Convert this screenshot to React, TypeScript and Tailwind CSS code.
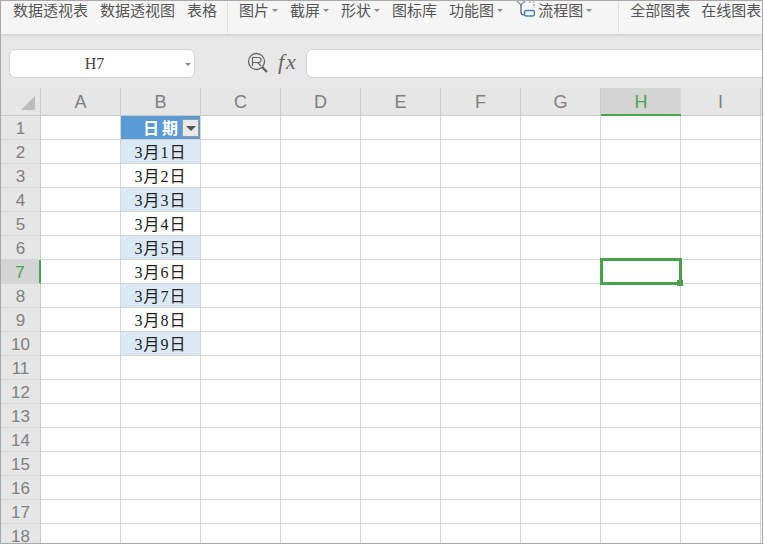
import { Fragment } from 'react'

const COLS = ['A', 'B', 'C', 'D', 'E', 'F', 'G', 'H', 'I', '']
const ROWS = Array.from({ length: 18 }, (_, i) => i + 1)
const DATES = ['3月1日', '3月2日', '3月3日', '3月4日', '3月5日', '3月6日', '3月7日', '3月8日', '3月9日']

function Caret({ className = '' }: { className?: string }) {
  return <span className={`w-0 h-0 border-x-[3px] border-x-transparent border-t-[3px] border-t-[#8a8a8a] ${className}`} />
}

function ToolItem({ label, caret, className = '' }: { label: string; caret?: boolean; className?: string }) {
  return (
    <div className={`flex items-center shrink-0 ${className}`}>
      <span>{label}</span>
      {caret && <Caret className="ml-[3px]" />}
    </div>
  )
}

function FlowIcon() {
  return (
    <svg width="20" height="20" viewBox="0 0 20 20" fill="none" className="shrink-0 -mt-[4px]">
      <path d="M1 2 L6 7 L11 2" stroke="#6d8fb5" strokeWidth="1.2" />
      <path d="M6 7 V14 Q6 17 9 17" stroke="#555" strokeWidth="1.2" />
      <path d="M14 4 H19 V10" stroke="#9a9a9a" strokeWidth="1.2" strokeDasharray="2 1.5" />
      <rect x="9.5" y="12.5" width="10" height="5.5" rx="2" stroke="#3f7fc4" strokeWidth="1.4" />
    </svg>
  )
}

function Toolbar() {
  return (
    <div className="h-[33px] shrink-0 bg-[#f5f5f5] flex items-start text-[15px] leading-[17px] text-[#555] shadow-[0_1px_3px_rgba(0,0,0,0.15)] relative pl-3 pt-[1px]">
      <ToolItem label="数据透视表" />
      <ToolItem label="数据透视图" className="ml-3" />
      <ToolItem label="表格" className="ml-3" />
      <div className="w-px h-[31px] bg-[#e0e0e0] ml-[10px] shrink-0" />
      <ToolItem label="图片" caret className="ml-[11px]" />
      <ToolItem label="截屏" caret className="ml-3" />
      <ToolItem label="形状" caret className="ml-3" />
      <ToolItem label="图标库" className="ml-3" />
      <ToolItem label="功能图" caret className="ml-3" />
      <div className="ml-3 mr-[3px] shrink-0 flex items-start"><FlowIcon /></div>
      <ToolItem label="流程图" caret />
      <div className="w-px h-[31px] bg-[#e0e0e0] ml-[26px] shrink-0" />
      <ToolItem label="全部图表" className="ml-[11px]" />
      <ToolItem label="在线图表" className="ml-[11px]" />
    </div>
  )
}

function FormulaBar() {
  return (
    <div className="h-[54px] shrink-0 bg-[#e8e8e8] flex items-center pl-2 pt-[4px]">
      <div className="w-[186px] h-[29px] shrink-0 bg-white border border-[#d2d2d2] rounded-[6px] flex items-center relative">
        <span className="w-full text-center text-[16px] text-[#444] pr-[15px] pt-[2px] font-['Liberation_Serif',serif]">H7</span>
        <Caret className="absolute right-[3px] top-[13px]" />
      </div>
      <svg width="22" height="22" viewBox="0 0 22 22" fill="none" className="ml-[52px] shrink-0">
        <circle cx="9.5" cy="9.5" r="8" stroke="#666" strokeWidth="1.3" />
        <path d="M5.5 14 V5.5 H11.5 Q14 5.5 14 8 Q14 10.5 11.5 10.5 H5.5 M10.5 10.5 L14 14" stroke="#666" strokeWidth="1.2" />
        <path d="M15 15 L20 20" stroke="#666" strokeWidth="2.4" />
      </svg>
      <span className="ml-[9px] w-[21px] shrink-0 text-[22px] italic tracking-[2px] text-[#666] -mt-[3px] font-['Liberation_Serif',serif]">fx</span>
      <div className="ml-[7px] flex-1 h-[29px] bg-white border border-r-0 border-[#d2d2d2] rounded-l-[6px]" />
    </div>
  )
}

function HeaderCell({ col }: { col: string }) {
  const active = col === 'H'
  return (
    <div
      className={`h-[28px] flex items-center justify-center text-[18px] pt-[2px] border-b-2 ${
        active ? 'bg-[#d4d4d4] text-[#4ba34c] border-[#4ba34c]' : 'bg-[#e6e6e6] text-[#808080] border-b-[#c9c9c9] border-b-[1px]'
      } ${col === 'H' ? '' : 'border-r border-r-[#c9c9c9]'}`}
    >
      {col}
    </div>
  )
}

function Cell({ row, col }: { row: number; col: string }) {
  const base = "h-[24px] border-r border-b border-[#d4d4d4] relative flex items-center justify-center text-[16px] text-[#222] pt-[2px] font-['Liberation_Serif','Noto_Sans_CJK_SC',serif]"
  if (col === 'B' && row === 1) {
    return (
      <div className={`${base} bg-[#5b9bd5] text-white`}>
        <span className="tracking-[3px] ml-[3px] font-bold">日期</span>
        <div className="absolute right-[1px] top-[3px] w-[17px] h-[18px] bg-[#e8e8e8] border border-[#9a9a9a] flex items-center justify-center">
          <span className="w-0 h-0 border-x-[5px] border-x-transparent border-t-[5px] border-t-[#555]" />
        </div>
      </div>
    )
  }
  if (col === 'B' && row >= 2 && row <= 10) {
    return (
      <div className={`${base} tracking-[1px] ${row % 2 === 0 ? 'bg-[#dbe9f6] border-[#c4d8ec]' : 'bg-white border-[#c4d8ec]'}`}>
        {DATES[row - 2]}
      </div>
    )
  }
  return (
    <div className={`${base} bg-white`}>
      {col === 'H' && row === 7 && (
        <div className="absolute -left-[1px] -top-[2px] w-[82px] h-[27px] border-[3px] border-[#4aa04d] z-10">
          <span className="absolute -right-[4px] -bottom-[4px] w-[6px] h-[6px] bg-[#4aa04d] border-0" />
        </div>
      )}
    </div>
  )
}

export default function App() {
  return (
    <div className="w-[764px] h-[545px] overflow-hidden bg-white font-['Liberation_Sans','Noto_Sans_CJK_SC',sans-serif]">
      <div className="w-[763px] h-[544px] border border-[#a8a8a8] flex flex-col overflow-hidden">
        <Toolbar />
        <FormulaBar />
        <div className="grid grid-cols-[40px_repeat(9,80px)_40px] flex-1 overflow-hidden">
          <div className="h-[28px] bg-[#e6e6e6] border-r border-b border-[#c9c9c9] relative">
            <span className="absolute right-[5px] bottom-[5px] w-0 h-0 border-l-[14px] border-l-transparent border-b-[14px] border-b-[#bcbcbc]" />
          </div>
          {COLS.map((col) => (
            <HeaderCell key={col || 'blank'} col={col} />
          ))}
          {ROWS.map((row) => (
            <Fragment key={row}>
              <div
                className={`h-[24px] flex items-center justify-center text-[17px] pt-[2px] border-b border-[#d4d4d4] ${
                  row === 7
                    ? 'bg-[#d4d4d4] text-[#4ba34c] border-r-2 border-r-[#4ba34c]'
                    : 'bg-[#e6e6e6] text-[#808080] border-r border-r-[#c9c9c9]'
                }`}
              >
                {row}
              </div>
              {COLS.map((col) => (
                <Cell key={col || 'blank'} row={row} col={col} />
              ))}
            </Fragment>
          ))}
        </div>
      </div>
    </div>
  )
}
